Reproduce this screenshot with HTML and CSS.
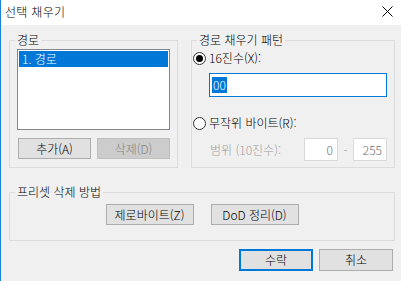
FILE: index.html
```html
<!DOCTYPE html>
<html lang="ko">
<head>
    <meta charset="UTF-8">
    <title>선택 채우기</title>
    <link rel="stylesheet" href="styles.css">
</head>
<body>
    <div class="window">
        <div class="titlebar">
            <span class="title">선택 채우기</span>
            <svg class="close" width="11" height="11" viewBox="0 0 11 11">
                <path d="M0.5 0.5 L10.5 10.5 M10.5 0.5 L0.5 10.5" stroke="#000" stroke-width="1" fill="none"/>
            </svg>
        </div>
        <div class="content">
            <div class="top-row">
                <fieldset class="group">
                    <legend>경로</legend>
                    <div class="path-box">
                        <div class="listbox">
                            <div class="list-item selected">1. 경로</div>
                        </div>
                        <div class="path-buttons">
                            <button class="btn">추가(A)</button>
                            <button class="btn" disabled>삭제(D)</button>
                        </div>
                    </div>
                </fieldset>
                <fieldset class="group">
                    <legend>경로 채우기 패턴</legend>
                    <div class="pattern-box">
                        <div class="radio-row first">
                            <span class="radio checked"></span>
                            <span>16진수(X):</span>
                        </div>
                        <div class="hex-input"><span class="sel">00</span></div>
                        <div class="radio-row second">
                            <span class="radio"></span>
                            <span>무작위 바이트(R):</span>
                        </div>
                        <div class="range-row">
                            <span class="range-label">범위 (10진수):</span>
                            <span class="num-box">0</span>
                            <span class="dash">-</span>
                            <span class="num-box">255</span>
                        </div>
                    </div>
                </fieldset>
            </div>
            <fieldset class="group preset">
                <legend>프리셋 삭제 방법</legend>
                <div class="preset-buttons">
                    <button class="btn wide">제로바이트(Z)</button>
                    <button class="btn wide">DoD 정리(D)</button>
                </div>
            </fieldset>
            <div class="dialog-buttons">
                <button class="btn default">수락</button>
                <button class="btn">취소</button>
            </div>
        </div>
    </div>
</body>
</html>
```

FILE: styles.css
```css
body {
    margin: 0;
    font-family: "Noto Sans CJK KR", "Noto Sans", sans-serif;
    font-size: 12px;
    font-weight: 300;
    line-height: 16px;
    color: #000;
    background-color: #f0f0f0;
}
.window {
    width: 400px;
    height: 281px;
    border-left: 1px solid #1883d7;
    background-color: #f0f0f0;
}
.titlebar {
    height: 25px;
    background-color: #fff;
    display: flex;
    align-items: center;
    justify-content: space-between;
    padding: 0 8px 0 4px;
}
.title {
    margin-top: -1px;
    letter-spacing: 0.3px;
}
.close {
    margin-top: -2px;
}
.content {
    padding: 7px 6px 0 8px;
}
.top-row {
    display: grid;
    grid-template-columns: 169px 204px;
    column-gap: 13px;
}
.group {
    margin: 0;
    padding: 0;
    border: 1px solid #dcdcdc;
    min-width: 0;
}
.group legend {
    margin-left: 5px;
    padding: 0 2px;
    line-height: 16px;
}
.path-box {
    padding: 1px 7px 8px 7px;
}
.listbox {
    height: 81px;
    box-sizing: border-box;
    border: 1px solid #828790;
    background-color: #fff;
    padding: 1px;
}
.list-item {
    height: 16px;
    padding-left: 3px;
}
.list-item.selected {
    background-color: #0078d7;
    color: #fff;
}
.path-buttons {
    display: flex;
    gap: 6px;
    margin-top: 8px;
    padding-left: 1px;
}
.btn {
    font-family: inherit;
    font-size: 12px;
    font-weight: 300;
    line-height: 16px;
    width: 74px;
    height: 21px;
    padding: 0;
    background-color: #e1e1e1;
    border: 1px solid #adadad;
    color: #000;
}
.btn:disabled {
    background-color: #cccccc;
    border-color: #bfbfbf;
    color: #838383;
}
.pattern-box {
    padding: 0 7px 6px 1px;
}
.radio-row {
    display: flex;
    align-items: center;
    gap: 3px;
    height: 16px;
}
.radio-row.first {
    margin-top: 2px;
}
.radio-row.second {
    margin-top: 18px;
}
.radio {
    width: 13px;
    height: 13px;
    box-sizing: border-box;
    border: 1px solid #333;
    border-radius: 50%;
    background-color: #fff;
    display: flex;
    align-items: center;
    justify-content: center;
}
.radio.checked::after {
    content: "";
    width: 7px;
    height: 7px;
    border-radius: 50%;
    background-color: #000;
}
.hex-input {
    margin: 7px 0 0 16px;
    height: 24px;
    box-sizing: border-box;
    border: 1px solid #0078d7;
    background-color: #fff;
    padding: 3px 2px;
}
.sel {
    background-color: #0078d7;
    color: #fff;
    display: inline-block;
    padding: 0 1px;
}
.range-row {
    display: flex;
    align-items: center;
    margin-top: 7px;
    height: 23px;
}
.range-label {
    flex: 1;
    padding-left: 17px;
    color: #a0a0a0;
}
.num-box {
    width: 34px;
    height: 23px;
    box-sizing: border-box;
    border: 1px solid #d9d9d9;
    background-color: #fff;
    color: #6d6d6d;
    text-align: right;
    padding: 3px 4px 0 0;
}
.dash {
    width: 15px;
    text-align: center;
    color: #a0a0a0;
}
.preset {
    margin-top: 16px;
}
.preset-buttons {
    display: flex;
    justify-content: center;
    gap: 17px;
    padding: 4px 0 15px 0;
}
.btn.wide {
    width: 88px;
}
.dialog-buttons {
    display: flex;
    justify-content: flex-end;
    gap: 6px;
    margin-top: 8px;
    padding-right: 2px;
}
.btn.default {
    border: 2px solid #0078d7;
}
.dialog-buttons .btn {
    height: 22px;
}
```
